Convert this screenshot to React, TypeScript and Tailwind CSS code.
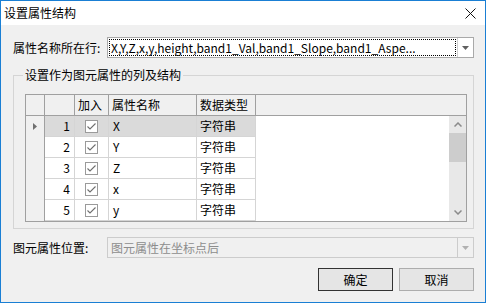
const rows = [
  { n: 1, name: "X" },
  { n: 2, name: "Y" },
  { n: 3, name: "Z" },
  { n: 4, name: "x" },
  { n: 5, name: "y" },
]

function Arrow({ disabled }: { disabled?: boolean }) {
  return (
    <svg width="7" height="4" viewBox="0 0 7 4">
      <path d="M0 0h7L3.5 4z" fill={disabled ? "#b0b0b0" : "#606060"} />
    </svg>
  )
}

function Combo({ text, disabled }: { text: string; disabled?: boolean }) {
  return (
    <div
      className={`flex h-[21px] w-[367px] border ${
        disabled ? "border-[#cccccc] bg-[#f0f0f0] text-[#8d8d8d]" : "border-[#a9a9a9] bg-white text-black"
      }`}
    >
      <div className="flex flex-1 items-center p-px">
        <div
          className={`flex h-full w-full items-center whitespace-nowrap px-[2px] leading-none ${
            disabled ? "" : "outline-1 outline-dotted outline-offset-[-1px] outline-black"
          }`}
        >
          {text}
        </div>
      </div>
      <div
        className={`flex w-[16px] items-center justify-center border-l ${
          disabled ? "border-[#cccccc]" : "border-[#d0d0d0]"
        }`}
      >
        <Arrow disabled={disabled} />
      </div>
    </div>
  )
}

export default function App() {
  return (
    <div className="h-[304px] w-[487px] bg-white font-['Microsoft_YaHei','Noto_Sans_CJK_SC',sans-serif] text-[12px] text-black">
      <div className="flex h-[303px] w-[486px] flex-col border border-[#1a7fd4]">
        <div className="flex h-[24px] items-center justify-between bg-white pl-[3px] pr-[9px]">
          <span>设置属性结构</span>
          <svg width="11" height="11" viewBox="0 0 11 11">
            <path d="M0.5 0.5l10 10M10.5 0.5l-10 10" stroke="#111" strokeWidth="1" />
          </svg>
        </div>

        <div className="flex flex-1 flex-col bg-[#f0f0f0] pl-[12px] pr-[11px] pt-[12px]">
          <div className="flex items-center">
            <span className="w-[94px]">属性名称所在行:</span>
            <Combo text="X,Y,Z,x,y,height,band1_Val,band1_Slope,band1_Aspe..." />
          </div>

          <fieldset className="mt-[9px] h-[162px] w-[461px] border border-[#d5d5d5] pl-[11px]">
            <legend className="ml-[-2px] px-[2px] leading-[16px]">设置作为图元属性的列及结构</legend>

            <div className="mt-[11px] flex h-[128px] w-[442px] flex-col border border-[#a0a0a0] bg-white">
              <div className="flex h-[21px] shrink-0 border-b border-[#a0a0a0] bg-[#f0f0f0]">
                <div className="w-[19px] border-r border-[#a0a0a0]" />
                <div className="w-[30px] border-r border-[#a0a0a0]" />
                <div className="flex w-[34px] items-center border-r border-[#a0a0a0] pl-[3px]">加入</div>
                <div className="flex w-[88px] items-center border-r border-[#a0a0a0] pl-[3px]">属性名称</div>
                <div className="flex w-[59px] items-center border-r border-[#a0a0a0] pl-[3px]">数据类型</div>
              </div>

              <div className="flex flex-1">
                <div className="flex flex-1 flex-col">
                  {rows.map((r, i) => (
                    <div key={r.n} className="flex h-[21px]">
                      <div className="flex w-[19px] items-center justify-center border-r border-[#a0a0a0] bg-[#f0f0f0]">
                        {i === 0 && (
                          <svg width="4" height="7" viewBox="0 0 4 7">
                            <path d="M0 0l4 3.5L0 7z" fill="#707070" />
                          </svg>
                        )}
                      </div>
                      <div className={`flex ${i === 0 ? "bg-[#dadada]" : ""}`}>
                        <div className="flex w-[30px] items-center justify-end border-b border-r border-[#d5d5d5] pr-[4px]">
                          {r.n}
                        </div>
                        <div className="flex w-[34px] items-center justify-center border-b border-r border-[#d5d5d5]">
                          <div className="flex h-[13px] w-[13px] items-center justify-center border border-[#9a9a9a] bg-white">
                            <svg width="11" height="11" viewBox="0 0 11 11">
                              <path d="M1.5 5.5l2.5 2.5L9.5 2.5" stroke="#6e6e6e" strokeWidth="1.1" fill="none" />
                            </svg>
                          </div>
                        </div>
                        <div className="flex w-[88px] items-center border-b border-r border-[#d5d5d5] pl-[4px]">
                          {r.name}
                        </div>
                        <div className="flex w-[59px] items-center border-b border-r border-[#d5d5d5] pl-[3px]">
                          字符串
                        </div>
                      </div>
                    </div>
                  ))}
                </div>

                <div className="flex w-[17px] flex-col bg-[#e8e8e8]">
                  <div className="flex h-[17px] items-center justify-center">
                    <svg width="8" height="5" viewBox="0 0 8 5">
                      <path d="M0.5 4.5L4 1l3.5 3.5" stroke="#8a8a8a" strokeWidth="1.5" fill="none" />
                    </svg>
                  </div>
                  <div className="h-[29px] bg-[#cdcdcd]" />
                  <div className="flex-1" />
                  <div className="flex h-[17px] items-center justify-center">
                    <svg width="8" height="5" viewBox="0 0 8 5">
                      <path d="M0.5 0.5L4 4l3.5-3.5" stroke="#8a8a8a" strokeWidth="1.5" fill="none" />
                    </svg>
                  </div>
                </div>
              </div>
            </div>
          </fieldset>

          <div className="mt-[8px] flex items-center">
            <span className="w-[94px]">图元属性位置:</span>
            <Combo text="图元属性在坐标点后" disabled />
          </div>

          <div className="mt-[10px] flex justify-end gap-[6px]">
            <button className="h-[23px] w-[75px] border border-[#333333] bg-[#e5e5e5]">确定</button>
            <button className="h-[23px] w-[75px] border border-[#adadad] bg-[#e5e5e5]">取消</button>
          </div>
        </div>
      </div>
    </div>
  )
}
